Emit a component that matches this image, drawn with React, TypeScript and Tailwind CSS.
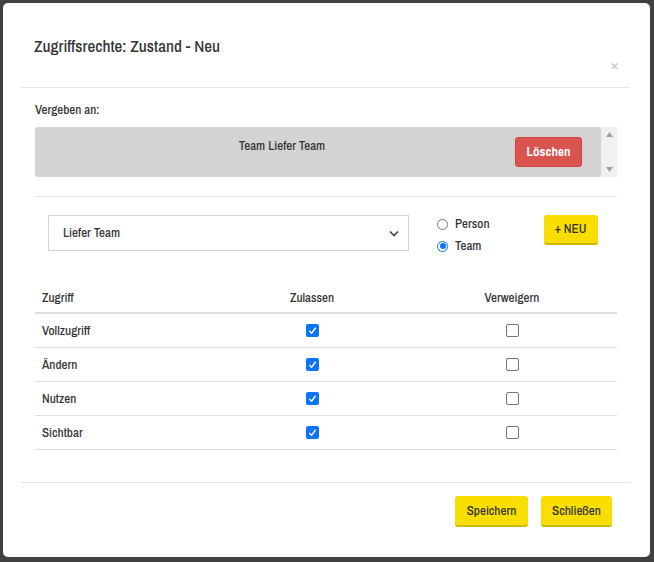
import React from "react";

function Check({ checked }: { checked: boolean }) {
  return checked ? (
    <div className="w-[13px] h-[13px] rounded-[2px] bg-[#0b75f5] flex items-center justify-center">
      <svg width="9" height="9" viewBox="0 0 10 10">
        <path d="M1.5 5.5 L4 8 L8.5 2" fill="none" stroke="white" strokeWidth="1.6" />
      </svg>
    </div>
  ) : (
    <div className="w-[13px] h-[13px] rounded-[2px] border border-[#767676] bg-white" />
  );
}

const rows = ["Vollzugriff", "Ändern", "Nutzen", "Sichtbar"];

export default function App() {
  return (
    <div className="w-[654px] h-[562px] bg-[#414141] pl-[3px] pt-[3px] font-['Archivo_Narrow',sans-serif] font-medium text-[13px]">
      <div className="w-[647px] h-[554px] bg-white rounded-[5px] flex flex-col text-[#333]">
        {/* header */}
        <div className="mx-[18px] w-[609px] h-[85px] border-b border-[#e5e5e5] relative">
          <div className="absolute left-[13px] top-[32px] text-[17px] leading-[22px]">Zugriffsrechte: Zustand - Neu</div>
          <div className="absolute right-[12px] top-[51px] text-[15px] text-[#c8c8c8]">×</div>
        </div>
        {/* body */}
        <div className="mx-[32px] w-[582px] flex flex-col">
          <div className="mt-[14px] h-[16px] leading-[16px]">Vergeben an:</div>
          <div className="mt-[9px] flex h-[50px]">
            <div className="w-[566px] h-[50px] bg-[#d3d3d3] rounded-[3px] flex items-start">
              <div className="w-[494px] pt-[11px] text-center leading-[16px]">Team Liefer Team</div>
              <div className="ml-[-14px] mt-[10px] w-[67px] h-[30px] bg-[#d9534f] border border-[#d43f3a] rounded-[3px] text-white font-bold flex items-center justify-center">Löschen</div>
            </div>
            <div className="w-[16px] h-[50px] bg-[#f1f1f1] flex flex-col items-center justify-between py-[5px]">
              <svg width="7" height="5" viewBox="0 0 7 5"><path d="M0 5 L3.5 0 L7 5 Z" fill="#a3a3a3" /></svg>
              <svg width="7" height="5" viewBox="0 0 7 5"><path d="M0 0 L3.5 5 L7 0 Z" fill="#a3a3a3" /></svg>
            </div>
          </div>
          <div className="mt-[19px] border-t border-[#e8e8e8]" />
          <div className="mt-[18px] flex items-start h-[36px]">
            <div className="ml-[13px] w-[361px] h-[36px] border border-[#d4d4d4] flex items-center justify-between pl-[14px] pr-[9px]">
              <span>Liefer Team</span>
              <svg width="10" height="7" viewBox="0 0 10 7"><path d="M1 1.5 L5 5.5 L9 1.5" fill="none" stroke="#444" strokeWidth="1.6" /></svg>
            </div>
            <div className="ml-[28px] flex flex-col gap-[8px] mt-[2px]">
              <div className="flex items-center gap-[7px] h-[14px]">
                <span className="w-[11px] h-[11px] rounded-full border border-[#767676] bg-white" />
                <span>Person</span>
              </div>
              <div className="flex items-center gap-[7px] h-[14px]">
                <span className="w-[11px] h-[11px] rounded-full border-[1.5px] border-[#0b75f5] bg-white flex items-center justify-center">
                  <span className="w-[6px] h-[6px] rounded-full bg-[#0b75f5]" />
                </span>
                <span>Team</span>
              </div>
            </div>
            <div className="ml-[54px] w-[54px] h-[30px] bg-[#fade00] rounded-[3px] border-b-2 border-[#d1b800] flex items-center justify-center">+ NEU</div>
          </div>
          {/* table */}
          <div className="mt-[37px]">
            <div className="grid grid-cols-[182px_190px_210px] h-[26px] border-b-2 border-[#dedede] items-start">
              <div className="pl-[7px]">Zugriff</div>
              <div className="text-center">Zulassen</div>
              <div className="text-center">Verweigern</div>
            </div>
            {rows.map((r) => (
              <div key={r} className="grid grid-cols-[182px_190px_210px] h-[34px] border-b border-[#dedede] items-center">
                <div className="pl-[7px]">{r}</div>
                <div className="flex justify-center"><Check checked /></div>
                <div className="flex justify-center"><Check checked={false} /></div>
              </div>
            ))}
          </div>
        </div>
        {/* footer */}
        <div className="mt-[32px] mx-[18px] w-[609px] border-t border-[#e5e5e5] flex justify-end gap-[13px] pt-[13px] pr-[18px]">
          <div className="w-[73px] h-[31px] bg-[#fade00] rounded-[3px] border-b-2 border-[#d1b800] flex items-center justify-center">Speichern</div>
          <div className="w-[71px] h-[31px] bg-[#fade00] rounded-[3px] border-b-2 border-[#d1b800] flex items-center justify-center">Schließen</div>
        </div>
      </div>
    </div>
  );
}
